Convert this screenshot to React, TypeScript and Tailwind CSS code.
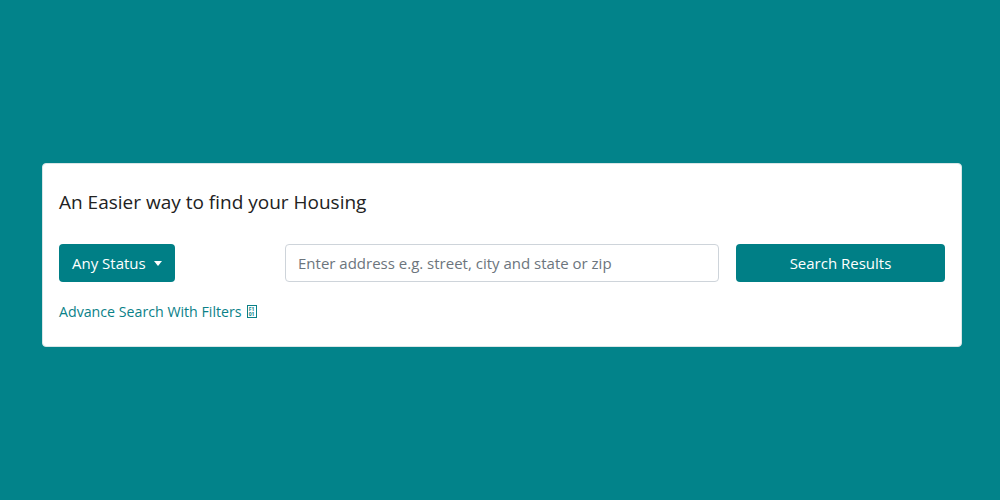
export default function App() {
  return (
    <div
      className="w-[1000px] h-[500px] bg-[#02838a] pt-[163px] pl-[42px]"
      style={{ fontFamily: '"Open Sans", "Noto Sans", sans-serif' }}
    >
      <div className="w-[920px] h-[184px] bg-white rounded-[4px] border border-[#d8e6e7] px-[16px] pt-[25px]">
        <h1 className="text-[19px] leading-[26px] text-[#222]">An Easier way to find your Housing</h1>
        <div className="flex mt-[29px] gap-[17px]">
          <div className="w-[209px]">
            <button className="h-[38px] px-[13px] bg-[#007f86] text-white text-[15px] rounded-[4px] flex items-center gap-[8px]">
              Any Status
              <span className="w-0 h-0 border-x-[4px] border-x-transparent border-t-[5px] border-t-white" />
            </button>
          </div>
          <input
            className="w-[434px] h-[38px] border border-[#ced4da] rounded-[4px] px-[12px] text-[15px] text-[#495057] placeholder:text-[#6c757d] outline-none"
            placeholder="Enter address e.g. street, city and state or zip"
          />
          <button className="flex-1 h-[38px] bg-[#007f86] text-white text-[15px] rounded-[4px]">Search Results</button>
        </div>
        <div className="mt-[19px] flex items-center gap-[5px] text-[14.2px] text-[#0a8188]">
          <span>Advance Search With Filters</span>
          <span className="w-[10px] h-[13px] border border-[#0a8188] flex flex-col items-center justify-center text-[5px] leading-[5px] font-bold">
            <span>F1</span>
            <span>01</span>
          </span>
        </div>
      </div>
    </div>
  );
}
